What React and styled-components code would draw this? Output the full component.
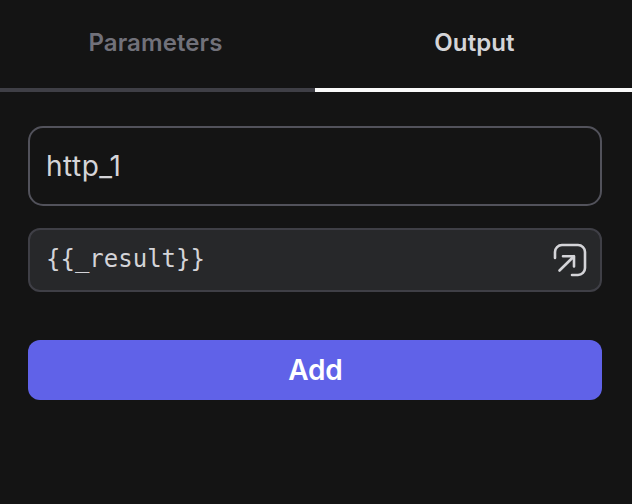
import React from "react";
import styled, { createGlobalStyle } from "styled-components";

const GlobalStyle = createGlobalStyle`
  *, *::before, *::after { box-sizing: border-box; }
  body { margin: 0; background: #141414; font-family: Inter, sans-serif; }
`;

const Panel = styled.main`
  width: 632px;
  height: 504px;
  background: #141414;
  color: #d4d4d8;
`;

const Tabs = styled.div`
  display: grid;
  grid-template-columns: 315px 317px;
  height: 92px;
`;

const Tab = styled.button`
  border: 0;
  border-bottom: 4px solid ${(p) => (p.$active ? "#fafafa" : "#3f3f46")};
  padding: ${(p) => (p.$active ? "0 0 2px 2px" : "0 4px 2px 0")};
  background: transparent;
  color: ${(p) => (p.$active ? "#d4d4d8" : "#71717a")};
  font: 600 24px/30px Inter, sans-serif;
  letter-spacing: 0.1px;
`;

const Form = styled.form`
  display: flex;
  flex-direction: column;
  padding: 34px 30px 0 28px;
`;

const NameInput = styled.input`
  width: 100%;
  height: 80px;
  padding: 0 16px;
  border: 2px solid #52525b;
  border-radius: 15px;
  background: transparent;
  color: #d4d4d8;
  font: 400 28px Inter, sans-serif;
  letter-spacing: 0.5px;
  outline: none;
`;

const Expression = styled.div`
  display: flex;
  align-items: center;
  justify-content: space-between;
  height: 64px;
  margin-top: 22px;
  padding: 0 13px 0 16px;
  border: 2px solid #3f3f46;
  border-radius: 12px;
  background: #27282a;
`;

const Code = styled.code`
  padding-bottom: 2px;
  font: 400 24px/30px "DejaVu Sans Mono", monospace;
`;

const AddButton = styled.button`
  height: 60px;
  margin-top: 48px;
  padding: 0 0 0 1px;
  border: 0;
  border-radius: 12px;
  background: #6062e8;
  color: #fff;
  font: 600 28px/34px Inter, sans-serif;
  letter-spacing: -0.2px;
`;

const OpenIcon = () => (
  <svg width="34" height="34" viewBox="0 0 34 34" fill="none" stroke="#d4d4d8" strokeWidth="2.6" strokeLinecap="round" strokeLinejoin="round">
    <path d="M2 15V9a7 7 0 0 1 7-7h16a7 7 0 0 1 7 7v16a7 7 0 0 1-7 7h-6" />
    <path d="M6.5 27.5 21 13.2M10 13.2h11V23.5" />
  </svg>
);

export default function App() {
  return (
    <Panel>
      <GlobalStyle />
      <Tabs role="tablist">
        <Tab role="tab">Parameters</Tab>
        <Tab role="tab" $active>Output</Tab>
      </Tabs>
      <Form>
        <NameInput defaultValue="http_1" aria-label="Name" />
        <Expression>
          <Code>{"{{_result}}"}</Code>
          <OpenIcon />
        </Expression>
        <AddButton type="button">Add</AddButton>
      </Form>
    </Panel>
  );
}
